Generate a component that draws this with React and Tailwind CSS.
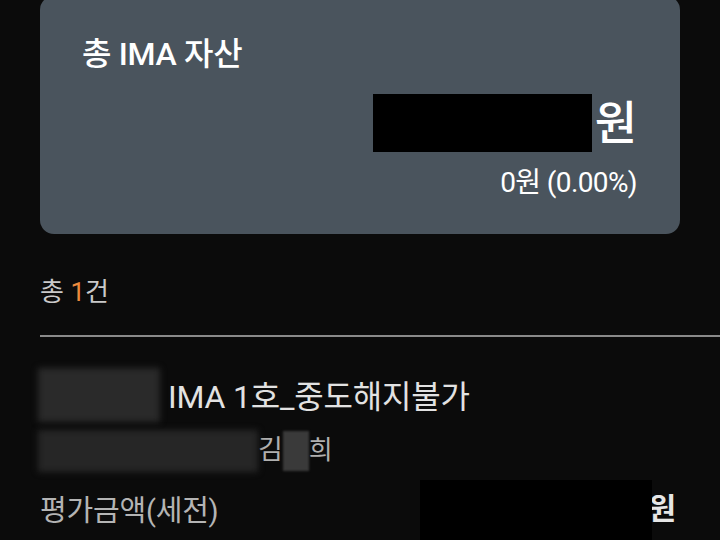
export default function App() {
  const font = { fontFamily: '"Roboto", "Noto Sans CJK KR", sans-serif' };
  return (
    <div className="w-[720px] h-[540px] overflow-hidden bg-[#0b0b0b]" style={font}>
      <div className="mx-[40px] -mt-[4px] h-[238px] rounded-[14px] bg-[#4a545d] pl-[42px] pr-[43px] pt-[36px] flex flex-col">
        <div className="text-[32px] leading-[44px] font-medium text-white tracking-[-0.3px]">총 IMA 자산</div>
        <div className="mt-[18px] flex justify-end items-center h-[58px]">
          <div className="w-[219px] h-[58px] bg-black" />
          <div className="ml-[3px] text-[46px] leading-[58px] font-medium text-white">원</div>
        </div>
        <div className="mt-[14px] text-right text-[28px] leading-[34px] text-white tracking-[-0.6px]">0원 (0.00%)</div>
      </div>
      <div className="px-[40px] pt-[40px] text-[26px] leading-[36px] text-[#c9c9c9]">
        총 <span className="text-[#ec8a3e]">1</span>건
      </div>
      <div className="ml-[40px] mt-[25px] h-[2px] bg-[#8a8a8a]" />
      <div className="pl-[38px] pt-[31px]">
        <div className="flex items-center h-[54px]">
          <div className="w-[122px] h-[54px] bg-[#2a2a2a] blur-[3px]" />
          <div className="ml-[8px] text-[32px] leading-[40px] text-[#e2e2e2] mt-[4px] tracking-[-0.2px]">IMA 1호_중도해지불가</div>
        </div>
        <div className="flex items-center h-[42px] mt-[8px]">
          <div className="w-[220px] h-[42px] bg-[#262626] blur-[3px]" />
          <span className="text-[27px] leading-[36px] text-[#b0b0b0] -mt-[3px]">김</span>
          <div className="w-[26px] h-[40px] bg-[#3a3a3a] blur-[1px]" />
          <span className="text-[26px] leading-[36px] text-[#b0b0b0] -mt-[3px]">희</span>
        </div>
      </div>
      <div className="pl-[40px] pr-[44px] mt-[8px] flex items-center h-[62px]">
        <div className="text-[29px] leading-[36px] text-[#b4b4b4] tracking-[-0.2px]">평가금액(세전)</div>
        <div className="flex-1" />
        <div className="relative z-10 w-[232px] h-[62px] bg-black" />
        <div className="-ml-[4px] text-[30px] leading-[40px] font-bold text-[#e6e6e6] -mt-[4px]">원</div>
      </div>
    </div>
  );
}
